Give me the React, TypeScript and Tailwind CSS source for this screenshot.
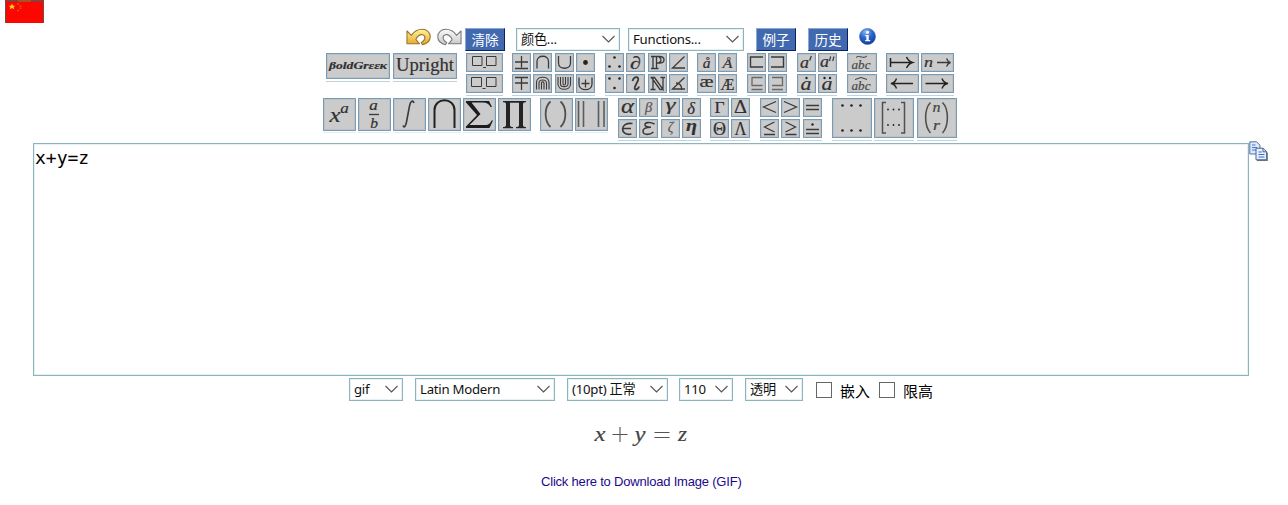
import type { ReactNode } from 'react';

const SERIF = '"Liberation Serif", "DejaVu Serif", serif';

type GlyphProps = { x: number; y: number; s: number; children: string; up?: boolean; b?: boolean; len?: number; fill?: string };

function G({ x, y, s, children, up, b, len, fill = '#303030' }: GlyphProps) {
  return (
    <text
      x={x}
      y={y}
      fontSize={s}
      fontFamily={SERIF}
      fontStyle={up ? 'normal' : 'italic'}
      fontWeight={b ? 700 : 400}
      textAnchor="middle"
      textLength={len}
      lengthAdjust="spacingAndGlyphs"
      fill={fill}
      stroke={fill}
      strokeWidth={0.2}
    >
      {children}
    </text>
  );
}

function P({ d, w = 1.3, c = '#3a3a3a' }: { d: string; w?: number; c?: string }) {
  return <path d={d} strokeWidth={w} stroke={c} fill="none" />;
}

function Dots({ at, r = 0.9 }: { at: number[][]; r?: number }) {
  return (
    <>
      {at.map(([x, y]) => (
        <circle key={`${x}-${y}`} cx={x} cy={y} r={r} fill="#222" />
      ))}
    </>
  );
}

const sizes = {
  small: { cls: 'h-[19px] w-[19px]', w: 19, h: 19 },
  boxes: { cls: 'h-[19px] w-[37px]', w: 37, h: 19 },
  hat: { cls: 'h-[19px] w-[30px]', w: 30, h: 19 },
  arrow: { cls: 'h-[19px] w-[33px]', w: 33, h: 19 },
  style: { cls: 'h-[26px] w-[64px]', w: 64, h: 26 },
  large: { cls: 'h-[33px] w-[33px]', w: 33, h: 33 },
  matrix: { cls: 'h-[40px] w-[40px]', w: 40, h: 40 },
};

function Key({ size = 'small', children }: { size?: keyof typeof sizes; children: ReactNode }) {
  const s = sizes[size];
  return (
    <div className={`${s.cls} shrink-0 border border-[#7d9ab0] bg-[#cbcbcb] shadow-[inset_0_0_0_1px_#b8c2c9]`}>
      <svg className="block h-full w-full" viewBox={`1 1 ${s.w - 2} ${s.h - 2}`}>
        {children}
      </svg>
    </div>
  );
}

function Under({ children }: { children: ReactNode }) {
  return <div className="h-fit w-fit border-b border-[#c3d2da] pb-[2px]">{children}</div>;
}

function LargeUnder({ children }: { children: ReactNode }) {
  return <div className="h-fit w-fit border-b border-[#e3ecee] pb-[1px]">{children}</div>;
}

function Group({ cols, children }: { cols: string; children: ReactNode }) {
  return (
    <div className="h-fit w-fit border-b border-[#c3d2da] pb-[2px]">
      <div className={`grid gap-x-[2.33px] gap-y-[2px] ${cols}`}>{children}</div>
    </div>
  );
}

function Select({ label, cls }: { label: string; cls: string }) {
  return (
    <div className={`flex h-[23px] shrink-0 items-center justify-between border border-[#8cb4bd] bg-white pr-[4px] pl-[4px] text-[13.2px] leading-none tracking-[-0.25px] text-[#111] shadow-[inset_0_0_0_1px_#e5f1f4] ${cls}`}>
      <span className="whitespace-nowrap">{label}</span>
      <svg className="-mt-[1px] h-[8px] w-[13px] shrink-0" viewBox="0 0 13 8">
        <path d="M.5 1L6.5 7L12.5 1" fill="none" stroke="#555" strokeWidth="1.1" />
      </svg>
    </div>
  );
}

function Button({ label, cls }: { label: string; cls: string }) {
  return (
    <button className={`flex h-[23px] w-[40px] shrink-0 items-center justify-center border border-t-[#8ba7d3] border-r-[#0b2064] border-b-[#0b2064] border-l-[#8ba7d3] bg-[#4169b0] text-[13.6px] leading-none text-white ${cls}`}>
      {label}
    </button>
  );
}

function Flag() {
  return (
    <svg className="ml-[5px] block h-[23px] w-[39px]" viewBox="0 0 39 23">
      <path d="M0 0H39V23H0Z" fill="#fb0700" />
      <path d="M0 0H39V1.4H0ZM0 0V23H1V0ZM38 0V23H39V0Z" fill="#665050" />
      <path d="M13 1H26" stroke="#c46a10" />
      <path d="M7 3.5L8 5.7H10.4L8.6 7L9.3 9.2L7 8L4.7 9.2L5.4 7L3.6 5.7H6Z" fill="#ffdc20" />
      <path d="M12 4h2M14.5 6h2M14.5 8.3h2M12 10.5h2" stroke="#c95c10" strokeWidth="1.6" />
    </svg>
  );
}

function Undo({ redo }: { redo?: boolean }) {
  const id = redo ? 'redoFill' : 'undoFill';
  return (
    <svg className={redo ? 'ml-[6px] h-[18px] w-[25px] -scale-x-100' : 'ml-px h-[18px] w-[25px]'} viewBox="0 0 26 18" preserveAspectRatio="none">
      <defs>
        <linearGradient id={id} x1="0" y1="0" x2="0" y2="1">
          <stop offset="0" stopColor={redo ? '#fafafa' : '#fff3a0'} />
          <stop offset="1" stopColor={redo ? '#c8c8c8' : '#e2a922'} />
        </linearGradient>
      </defs>
      <path
        d="M1 3V15.8H14L10.3 11.6C11.3 8.4 14.5 6 17.3 6.8C21 8 20.3 12.3 15.8 14.8L17.2 16.8C22 15.6 25.2 12.6 25.2 8.8C25.2 4.2 21.5 1.3 17 1.3C12.3 1.3 8 4 5.6 7.4Z"
        fill={`url(#${id})`}
        stroke={redo ? '#777' : '#98712a'}
        strokeWidth="1.1"
        strokeLinejoin="round"
      />
    </svg>
  );
}

function Info() {
  return (
    <svg className="ml-[11px] h-[17px] w-[17px]" viewBox="0 0 17 17">
      <defs>
        <radialGradient id="infoFill" cx=".4" cy=".2" r=".8">
          <stop offset="0" stopColor="#8fb8f2" />
          <stop offset=".5" stopColor="#2d68cf" />
          <stop offset="1" stopColor="#123c9c" />
        </radialGradient>
      </defs>
      <circle cx="8.5" cy="8.5" r="8" fill="url(#infoFill)" stroke="#2f5eb5" strokeWidth=".6" />
      <circle cx="8.5" cy="4.2" r="1.5" fill="#fff" />
      <path d="M6.3 7H9.7V12H11.2V13.3H6.2V12H7.4V8.2H6.3Z" fill="#fff" />
    </svg>
  );
}

function Copy() {
  return (
    <svg className="-mt-[2px] h-[21px] w-[19px]" viewBox="0 0 19 21">
      <path d="M8 18.8V20H18.8V11.5H17.8" fill="#77766c" />
      <path d="M.8.8H7.5L11 4.2V13H.8Z" fill="#dce9fb" stroke="#56719f" />
      <path d="M3 4h3.5M3 6.5h5M3 9h5" stroke="#4f74cd" />
      <path d="M7 7.2H14L17.6 10.8V18.8H7Z" fill="#e6f0fe" stroke="#4a6593" />
      <path d="M14 7.2V10.8H17.6" fill="none" stroke="#4a6593" />
      <path d="M9.5 11h3.3M9.5 13.5h6M9.5 16h6" stroke="#416bd0" strokeWidth="1.2" />
    </svg>
  );
}

function Check({ label, cls }: { label: string; cls: string }) {
  return (
    <label className={`flex shrink-0 ${cls}`}>
      <span className="mt-[4px] h-[16px] w-[16px] border-[1.4px] border-[#666] bg-white" />
      <span className="mt-[6px] ml-[8px] text-[15px] leading-[15px] whitespace-nowrap text-black">{label}</span>
    </label>
  );
}

function FirstRow() {
  return (
    <div className="mt-[2px] ml-[326px] grid h-[45px] grid-cols-[66.5px_73.5px_46px_93px_92px_50px_50px_50px_39px_70px]">
      <Under>
        <Key size="style"><G x={32} y={15.5} s={11} b len={58}>βoldGrεεκ</G></Key>
      </Under>
      <Under>
        <Key size="style"><G x={32} y={17.5} s={19.5} up len={58}>Upright</G></Key>
      </Under>
      <Group cols="grid-cols-[37px]">
        <Key size="boxes"><P d="M6.5 3.5h9.5v9H6.5ZM20.5 3.5H30v9h-9.5ZM17 14.5h3" w={1} /></Key>
        <Key size="boxes"><P d="M5.5 3.5h10v9h-10ZM20.5 3.5H30v9h-9.5ZM16.5 14.5h3" w={1} /></Key>
      </Group>
      <Group cols="grid-cols-[19px_19px_19px_19px]">
        <Key><P d="M3 9h13M9.5 3v11.5M3 15.5h13" /></Key>
        <Key><P d="M4 15.5V8.5C4 1.5 15.5 1.5 15.5 8.5V15.5" /></Key>
        <Key><P d="M3.5 3V10C3.5 17 15.5 17 15.5 10V3" /></Key>
        <Key><Dots at={[[9.5, 9.5]]} r={2.4} /></Key>
        <Key><P d="M3 3.5h13M3 9h13M9.5 4v12" /></Key>
        <Key><P d="M3.5 15.5V8.5C3.5 1.5 16 1.5 16 8.5V15.5M6 15.5V9C6 5 13.5 5 13.5 9V15.5M8.5 15.5V9C8.5 7.5 11 7.5 11 9V15.5" w={1.1} /></Key>
        <Key><P d="M3 3V10C3 17 15.5 17 15.5 10V3M5.5 3V10C5.5 13.5 13 13.5 13 10V3M8 3V9.5C8 11.5 10.5 11.5 10.5 9.5V3" w={1.1} /></Key>
        <Key><P d="M3 3.5V10C3 17.5 16 17.5 16 10V3.5M5.5 9.5h8M9.5 5.5v8" /></Key>
      </Group>
      <Group cols="grid-cols-[19px_19px_19px_19px]">
        <Key><Dots at={[[9.5, 4.5], [4.5, 13.5], [14.5, 13.5]]} r={1.3} /></Key>
        <Key><G x={9.5} y={15.5} s={18} up len={11}>∂</G></Key>
        <Key>
          <P d="M3 3.5H11.5C17.5 3.5 17.5 10 11.5 10H9M5 3.5V15.5M8.5 3.5V15.5M3 15.5H10.5M11 4C14 6 13.5 8.5 11 9.5" w={1.3} />
        </Key>
        <Key><P d="M15.5 3.5L3.5 15H16" /></Key>
        <Key><Dots at={[[4.5, 4.5], [14.5, 4.5], [9.5, 14]]} r={1.3} /></Key>
        <Key><P d="M6.5 7C8 2 13.5 2 12 6.5L9 12.5C7.5 17 12 16 13 12.5" w={1.8} /></Key>
        <Key><P d="M2.5 3.5H6.5L15 15.5V3.5M12.5 3.5h4.5M5 3.5V15.5M2.5 15.5H7.5M3.5 3.5L12 15.5h3" w={1.3} /></Key>
        <Key><P d="M15.5 3.5L3.5 15H16M7 9C11 9 13 12 12.5 16" /></Key>
      </Group>
      <Group cols="grid-cols-[19px_19px]">
        <Key><G x={9.5} y={15} s={15.5}>å</G></Key>
        <Key><G x={9.5} y={15} s={13} len={10}>Å</G></Key>
        <Key><G x={9.5} y={13} s={16} up len={14}>æ</G></Key>
        <Key><G x={9.5} y={15.5} s={16.5} up len={14}>Æ</G></Key>
      </Group>
      <Group cols="grid-cols-[19px_19px]">
        <Key><P d="M16 4H3.5V14H16" w={1.4} /></Key>
        <Key><P d="M3 4H15.5V14H3" w={1.4} /></Key>
        <Key><P d="M15.5 3.5H5V11.5H15.5M4.5 15.5h11" c="#696969" /></Key>
        <Key><P d="M4 3.5H14.5V11.5H4M4 15.5h11" c="#696969" /></Key>
      </Group>
      <Group cols="grid-cols-[19px_19px]">
        <Key><G x={7.5} y={15} s={17} len={9}>a</G><P d="M14.3 3L12.7 7.5" w={1.3} /></Key>
        <Key><G x={6.5} y={14} s={16} len={9}>a</G><P d="M12.7 3.5L11.5 8M16 3.5L14.7 8" w={1.2} /></Key>
        <Key><G x={9} y={15.5} s={19} len={11}>a</G><Dots at={[[9.5, 4]]} r={1.2} /></Key>
        <Key><G x={9} y={15.5} s={19} len={11}>a</G><Dots at={[[6.5, 4], [12, 4]]} r={1.2} /></Key>
      </Group>
      <Group cols="grid-cols-[30px]">
        <Key size="hat"><G x={14} y={16} s={13.5} len={19} fill="#484848">abc</G><P d="M9 4.5C12 1.5 16 6.5 20 3" w={1} /></Key>
        <Key size="hat"><G x={14} y={16} s={13.5} len={19} fill="#484848">abc</G><P d="M8 5.5L14 3.5L20 5.5" w={1} /></Key>
      </Group>
      <Group cols="grid-cols-[33px_33px]">
        <Key size="arrow"><P d="M4.5 5V14M4.5 9.5H26M20.5 4C22 7.5 24 8.8 26.5 9.5C24 10.2 22 12 20.5 15" w={1.5} c="#222" /></Key>
        <Key size="arrow"><G x={7.5} y={14} s={15.5} len={9}>n</G><P d="M16 9.5H29M25.5 5.5C26.5 8 27.5 9 29.5 9.5C27.5 10 26.5 11 25.5 13.5" /></Key>
        <Key size="arrow"><P d="M27 9.5H5.5M10.5 4.5C9.5 7.5 7.5 9 5 9.5C7.5 10 9.5 11.5 10.5 14.5" w={1.4} c="#222" /></Key>
        <Key size="arrow"><P d="M4.5 9.5H26.5M21 4.5C22 7.5 24 9 27 9.5C24 10 22 11.5 21 14.5" w={1.4} c="#222" /></Key>
      </Group>
    </div>
  );
}

function SecondRow() {
  return (
    <div className="ml-[323px] grid h-[45px] grid-cols-[217px_78px_92px_50px_72px_130px]">
      <div className="flex gap-[2px]">
        <LargeUnder><Key size="large"><G x={12} y={24} s={22} len={11}>x</G><G x={21.5} y={15} s={15.5} len={8.5}>a</G></Key></LargeUnder>
        <LargeUnder><Key size="large"><G x={15.5} y={11.5} s={15} len={8.5}>a</G><P d="M11 16.5h10" w={1.3} /><G x={16} y={29.5} s={15.5}>b</G></Key></LargeUnder>
        <LargeUnder><Key size="large"><P d="M21 5C19.5 1.5 17.5 3 16.5 8L13.5 24C12.5 29 11 30 10 27.5" w={1.6} /></Key></LargeUnder>
        <LargeUnder><Key size="large"><P d="M6.5 30V12C6.5 -1 26.5 -1 26.5 12V30" w={2} c="#222" /></Key></LargeUnder>
        <LargeUnder><Key size="large"><path d="M3 3H26L29 9H27.5C26 6 24 4.5 20 4.5H8.5L17.5 16L6.5 27H22C26 27 27.5 25 28.5 22.5H30L26.5 30H3V28.5L14 17L3 4.5Z" fill="#1c1c1c" /></Key></LargeUnder>
        <LargeUnder><Key size="large"><path d="M5 3H28V4.2C26 4.2 25 4.7 25 6V27C25 28.5 26 29 28 29V30.2H18V29C20 29 21 28.5 21 27V4.8H12V27C12 28.5 13 29 15 29V30.2H5V29C7 29 8 28.5 8 27V6C8 4.7 7 4.2 5 4.2Z" fill="#242424" /></Key></LargeUnder>
      </div>
      <div className="flex gap-[2px]">
        <LargeUnder><Key size="large"><P d="M10.5 3.5C4 9 4 23 10.5 29M20.5 3.5C27 9 27 23 20.5 29" w={1.8} c="#505050" /></Key></LargeUnder>
        <LargeUnder><Key size="large"><P d="M3.5 3V29M8.5 3V29M23.5 3V29M29 3V29" w={1.6} c="#5c5c5c" /></Key></LargeUnder>
      </div>
      <Group cols="grid-cols-[19px_19px_19px_19px]">
        <Key><G x={9.5} y={14.5} s={20} len={13}>α</G></Key>
        <Key><G x={9.5} y={13.5} s={14.5} fill="#555">β</G></Key>
        <Key><G x={9.5} y={12} s={16.5} len={10}>γ</G></Key>
        <Key><G x={9} y={15.5} s={16.5}>δ</G></Key>
        <Key><P d="M14.5 4.5C1.5 2.5 1.5 17.5 13.5 15M4.5 9.5H13" w={1.7} /></Key>
        <Key><P d="M15.5 5C10.5 2.5 5.5 3.5 6 6C6.5 8 9 8.2 12 8.2C6.5 8.2 3.5 10 4 12.5C4.5 16.5 11 16 14.5 13" w={1.6} /></Key>
        <Key><G x={9.5} y={13} s={14} fill="#555">ζ</G></Key>
        <Key><G x={9.5} y={12} s={17} b len={11}>η</G></Key>
      </Group>
      <Group cols="grid-cols-[19px_19px]">
        <Key><G x={9.5} y={15} s={17.5} up>Γ</G></Key>
        <Key><G x={9.5} y={15} s={18} up len={13}>Δ</G></Key>
        <Key><G x={9.5} y={15.5} s={18} up>Θ</G></Key>
        <Key><G x={9.5} y={15.5} s={18} up len={12}>Λ</G></Key>
      </Group>
      <Group cols="grid-cols-[19px_19px_19px]">
        <Key><P d="M16 3.5L3.5 9L16 14.5" /></Key>
        <Key><P d="M3 3.5L15.5 9L3 14.5" /></Key>
        <Key><P d="M3 7.5h13M3 11.5h13" /></Key>
        <Key><P d="M14.5 3L4.5 8L14.5 13M4 15.5h11" /></Key>
        <Key><P d="M4.5 3L14.5 8L4.5 13M4.5 15.5h11" /></Key>
        <Key><P d="M3 10.5h13M3 14.5h13" /><Dots at={[[9.5, 5.5]]} r={1.2} /></Key>
      </Group>
      <div className="flex gap-[2.4px]">
        <Under><Key size="matrix"><Dots at={[[10.5, 7.5], [19.5, 7.5], [28.5, 7.5], [10.5, 32.5], [19.5, 32.5], [28.5, 32.5]]} r={1.3} /></Key></Under>
        <Under>
          <Key size="matrix">
            <P d="M12 4.5H8.5V35H12M27 4.5H30.5V35H27" w={1.5} c="#505050" />
            <Dots at={[[14, 11.5], [19.5, 11.5], [25, 11.5], [14, 27], [19.5, 27], [25, 27]]} r={0.9} />
          </Key>
        </Under>
        <Under>
          <Key size="matrix">
            <P d="M13.5 4.5C7 11 7 28 13.5 35M25.5 4.5C32 11 32 28 25.5 35" w={1.6} c="#505050" />
            <G x={19.5} y={14} s={14} len={8} fill="#444">n</G>
            <G x={19.5} y={32} s={14} len={7} fill="#444">r</G>
          </Key>
        </Under>
      </div>
    </div>
  );
}

export default function App() {
  return (
    <main className="h-[505px] w-[1288px] overflow-hidden bg-white font-['Noto_Sans','Noto_Sans_CJK_SC',sans-serif]">
      <Flag />
      <div className="mt-[5px] flex h-[23px] pl-[405px]">
        <Undo />
        <Undo redo />
        <Button label="清除" cls="ml-[3px]" />
        <Select label="颜色..." cls="ml-[11px] w-[104px]" />
        <Select label="Functions..." cls="ml-[8px] w-[116px]" />
        <Button label="例子" cls="ml-[12px]" />
        <Button label="历史" cls="ml-[12px]" />
        <Info />
      </div>
      <FirstRow />
      <SecondRow />
      <div className="flex pl-[33px]">
        <textarea
          className="block h-[233px] w-[1216px] resize-none border border-[#8cb4bd] px-px py-[3px] font-['DejaVu_Sans_Mono',monospace] text-[18px] leading-[22px] text-black shadow-[inset_0_0_0_1px_#e5f1f4] outline-none"
          defaultValue="x+y=z"
        />
        <Copy />
      </div>
      <div className="mt-[2px] flex h-[23px] pl-[349px]">
        <Select label="gif" cls="w-[54px]" />
        <Select label="Latin Modern" cls="ml-[12px] w-[140px]" />
        <Select label="(10pt) 正常" cls="ml-[12px] w-[101px]" />
        <Select label="110" cls="ml-[11px] w-[54px]" />
        <Select label="透明" cls="ml-[12px] w-[58px]" />
        <Check label="嵌入" cls="ml-[13px]" />
        <Check label="限高" cls="ml-[9px]" />
      </div>
      <svg className="mt-[19px] ml-[590px] block h-[30px] w-[102px]" viewBox="0 0 102 30">
        <G x={10} y={21} s={22} len={11} fill="#444">x</G>
        <P d="M22.5 14.5h15M30 7v15M64.5 12.5h15M64.5 17.5h15" w={1.1} c="#555" />
        <G x={50} y={21} s={22} len={11} fill="#444">y</G>
        <G x={92.5} y={21} s={22} len={9} fill="#444">z</G>
      </svg>
      <a className="mt-[23px] ml-[541px] block w-fit font-['Liberation_Sans',sans-serif] text-[13px] leading-[18px] tracking-[-0.2px] whitespace-nowrap text-[#1b0a8a]">
        Click here to Download Image (GIF)
      </a>
    </main>
  );
}
